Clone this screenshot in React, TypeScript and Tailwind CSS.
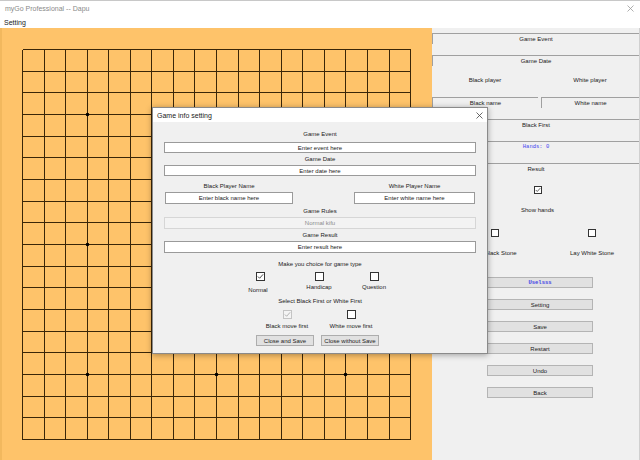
import React from "react";

const FONT = "font-['Liberation_Sans',Arial,sans-serif]";

function CheckBox({
  checked,
  disabled,
  size = 8,
}: {
  checked?: boolean;
  disabled?: boolean;
  size?: number;
}) {
  return (
    <span
      className={
        "flex items-center justify-center border " +
        (disabled ? "border-[#c4c4c4] bg-[#f4f4f4]" : "border-[#333333] bg-white")
      }
      style={{ width: size, height: size }}
    >
      {checked && (
        <svg width={size - 2} height={size - 2} viewBox="0 0 8 8">
          <polyline
            points="1,4 3,6 7,1.5"
            fill="none"
            stroke={disabled ? "#a8a8a8" : "#333333"}
            strokeWidth="1"
          />
        </svg>
      )}
    </span>
  );
}

function Board() {
  const lines = Array.from({ length: 19 }, (_, i) => i);
  const x = (i: number) => Math.round(22 + i * 21.56) + 0.5;
  const y = (i: number) => Math.round(21 + i * 21.67) + 0.5;
  const stars = [3, 9, 15];
  return (
    <div className="w-[432px] h-[432px] bg-[#fec36a] border-l-2 border-[#f2b85e] shrink-0">
      <svg width="430" height="432" viewBox="2 0 430 432" shapeRendering="crispEdges">
        {lines.map((i) => (
          <line key={"v" + i} x1={x(i)} y1={y(0)} x2={x(i)} y2={y(18)} stroke="#3a2608" strokeWidth="1" />
        ))}
        {lines.map((i) => (
          <line key={"h" + i} x1={x(0)} y1={y(i)} x2={x(18)} y2={y(i)} stroke="#3a2608" strokeWidth="1" />
        ))}
        {stars.map((a) =>
          stars.map((b) => (
            <circle key={a + "-" + b} cx={x(a)} cy={y(b)} r="1.8" fill="#000" shapeRendering="auto" />
          ))
        )}
      </svg>
    </div>
  );
}

function PanelBox({ children, className = "" }: { children: React.ReactNode; className?: string }) {
  return (
    <div
      className={
        "h-[11px] border-t border-l border-[#a0a0a0] flex justify-center items-center leading-none text-[6px] text-[#222] " +
        className
      }
    >
      {children}
    </div>
  );
}

function PanelButton({ children, blue }: { children: React.ReactNode; blue?: boolean }) {
  return (
    <button
      className={
        "ml-[55px] w-[106px] h-[11px] border border-[#b4b4b4] bg-[#e1e1e1] flex items-center justify-center leading-none " +
        (blue
          ? "font-['Liberation_Mono',monospace] font-bold text-[5.5px] text-[#4343e6]"
          : "text-[6px] text-[#222]")
      }
    >
      {children}
    </button>
  );
}

function RightPanel() {
  return (
    <div className="flex-1 h-[432px] bg-[#f0f0f0] border-r border-[#d0d0d0] flex flex-col pt-[5px]">
      <PanelBox>Game Event</PanelBox>
      <PanelBox className="mt-[11px]">Game Date</PanelBox>
      <div className="mt-[9px] h-[10px] flex items-center text-[6px] text-[#222] leading-none">
        <div className="w-[106px] text-center">Black player</div>
        <div className="flex-1 ml-[3px] text-center">White player</div>
      </div>
      <div className="mt-[12px] flex">
        <PanelBox className="w-[106px]">Black name</PanelBox>
        <PanelBox className="flex-1 ml-[3px]">White name</PanelBox>
      </div>
      <PanelBox className="mt-[11px]">Black First</PanelBox>
      <PanelBox className="mt-[11px]">
        <span className="font-['Liberation_Mono',monospace] text-[5.5px] text-[#4646f0]">Hands: 0</span>
      </PanelBox>
      <PanelBox className="mt-[11px]">Result</PanelBox>
      <div className="mt-[12px] flex justify-center pl-[4px]">
        <CheckBox checked />
      </div>
      <div className="mt-[12px] h-[8px] flex justify-center items-center pl-[4px] text-[6px] text-[#222] leading-none">
        Show hands
      </div>
      <div className="mt-[15px] flex">
        <div className="ml-[18px] w-[90px] flex justify-center">
          <CheckBox />
        </div>
        <div className="ml-[7px] w-[90px] flex justify-center">
          <CheckBox />
        </div>
      </div>
      <div className="mt-[12px] h-[8px] flex items-center text-[6px] text-[#222] leading-none">
        <div className="ml-[18px] w-[90px] text-center">Lay Black Stone</div>
        <div className="ml-[7px] w-[90px] text-center">Lay White Stone</div>
      </div>
      <div className="mt-[20px] flex flex-col gap-[11px]">
        <PanelButton blue>Uselsss</PanelButton>
        <PanelButton>Setting</PanelButton>
        <PanelButton>Save</PanelButton>
        <PanelButton>Restart</PanelButton>
        <PanelButton>Undo</PanelButton>
        <PanelButton>Back</PanelButton>
      </div>
    </div>
  );
}

function Field({
  text,
  className = "",
  disabled,
}: {
  text: string;
  className?: string;
  disabled?: boolean;
}) {
  return (
    <div
      className={
        "flex items-center justify-center border text-[6px] leading-none " +
        (disabled
          ? "bg-[#f3f3f3] border-[#d6d6d6] text-[#8c8c8c]"
          : "bg-white border-[#9a9a9a] text-[#222]") +
        " " +
        className
      }
    >
      {text}
    </div>
  );
}

function Label({ children, className = "" }: { children: React.ReactNode; className?: string }) {
  return (
    <div className={"h-[10px] flex items-center justify-center text-[6px] text-[#222] leading-none " + className}>
      {children}
    </div>
  );
}

function Dialog() {
  return (
    <div className="absolute left-[152px] top-[107px] w-[336px] h-[247px] border border-[#8a8a8a] bg-[#f0f0f0] shadow-[0_1px_6px_rgba(0,0,0,0.35)] flex flex-col">
      <div className="h-[14px] bg-white flex items-center justify-between pl-[4px] pr-[4px]">
        <span className="text-[7px] text-[#222] leading-none">Game info setting</span>
        <svg width="7" height="7" viewBox="0 0 7 7">
          <path d="M0.5 0.5 L6.5 6.5 M6.5 0.5 L0.5 6.5" stroke="#444" strokeWidth="0.8" />
        </svg>
      </div>

      <Label className="mt-[7px]">Game Event</Label>
      <Field text="Enter event here" className="mt-[3px] mx-[11px] h-[11px]" />
      <Label className="mt-[1px]">Game Date</Label>
      <Field text="Enter date here" className="mt-[1px] mx-[11px] h-[11px]" />

      <div className="mt-[5px] flex">
        <div className="ml-[12px] w-[128px] flex flex-col">
          <Label>Black Player Name</Label>
          <Field text="Enter black name here" className="mt-[1px] h-[12px]" />
        </div>
        <div className="ml-[61px] w-[121px] flex flex-col">
          <Label>White Player Name</Label>
          <Field text="Enter white name here" className="mt-[1px] h-[12px]" />
        </div>
      </div>

      <Label className="mt-[2px]">Game Rules</Label>
      <Field text="Normal kifu" disabled className="mt-[1px] mx-[11px] h-[12px]" />
      <Label className="mt-[1px]">Game Result</Label>
      <Field text="Enter result here" className="mt-[1px] mx-[11px] h-[12px]" />

      <Label className="mt-[6px]">Make you choice for game type</Label>
      <div className="mt-[3px] flex text-[6px] text-[#222] leading-none">
        <div className="ml-[85px] w-[40px] flex flex-col items-center">
          <span className="ml-[4px]">
            <CheckBox checked size={9} />
          </span>
          <span className="mt-[6px]">Normal</span>
        </div>
        <div className="ml-[21px] w-[40px] flex flex-col items-center">
          <CheckBox size={9} />
          <span className="mt-[3px]">Handicap</span>
        </div>
        <div className="ml-[15px] w-[40px] flex flex-col items-center">
          <CheckBox size={9} />
          <span className="mt-[3px]">Question</span>
        </div>
      </div>

      <Label className="mt-[3px]">Select Black First or White First</Label>
      <div className="mt-[4px] flex text-[6px] text-[#222] leading-none">
        <div className="ml-[104px] w-[60px] flex flex-col items-center">
          <CheckBox checked disabled size={9} />
          <span className="mt-[4px]">Black move first</span>
        </div>
        <div className="ml-[4px] w-[60px] flex flex-col items-center">
          <CheckBox size={9} />
          <span className="mt-[4px]">White move first</span>
        </div>
      </div>

      <div className="mt-[6px] flex">
        <button className="ml-[103px] w-[58px] h-[11px] border border-[#adadad] bg-[#e1e1e1] text-[6px] text-[#222] leading-none flex items-center justify-center">
          Close and Save
        </button>
        <button className="ml-[7px] w-[58px] h-[11px] border border-[#adadad] bg-[#e1e1e1] text-[6px] text-[#222] leading-none flex items-center justify-center">
          Close without Save
        </button>
      </div>
    </div>
  );
}

export default function App() {
  return (
    <div className={"w-[640px] h-[460px] bg-white relative overflow-hidden " + FONT}>
      {/* Window title */}
      <div className="h-[16px] border-t border-[#c8c8c8] flex items-center justify-between pl-[5px] pr-[6px]">
        <span className="text-[7px] text-[#8a8a8a] leading-none">myGo Professional -- Dapu</span>
        <svg width="7" height="7" viewBox="0 0 7 7">
          <path d="M0.5 0.5 L6.5 6.5 M6.5 0.5 L0.5 6.5" stroke="#9a9a9a" strokeWidth="0.8" />
        </svg>
      </div>
      {/* Menu bar */}
      <div className="h-[12px] flex items-center pl-[4px]">
        <span className="text-[7px] text-[#222] leading-none">Setting</span>
      </div>

      <div className="flex">
        <Board />
        <RightPanel />
      </div>

      <Dialog />
    </div>
  );
}
